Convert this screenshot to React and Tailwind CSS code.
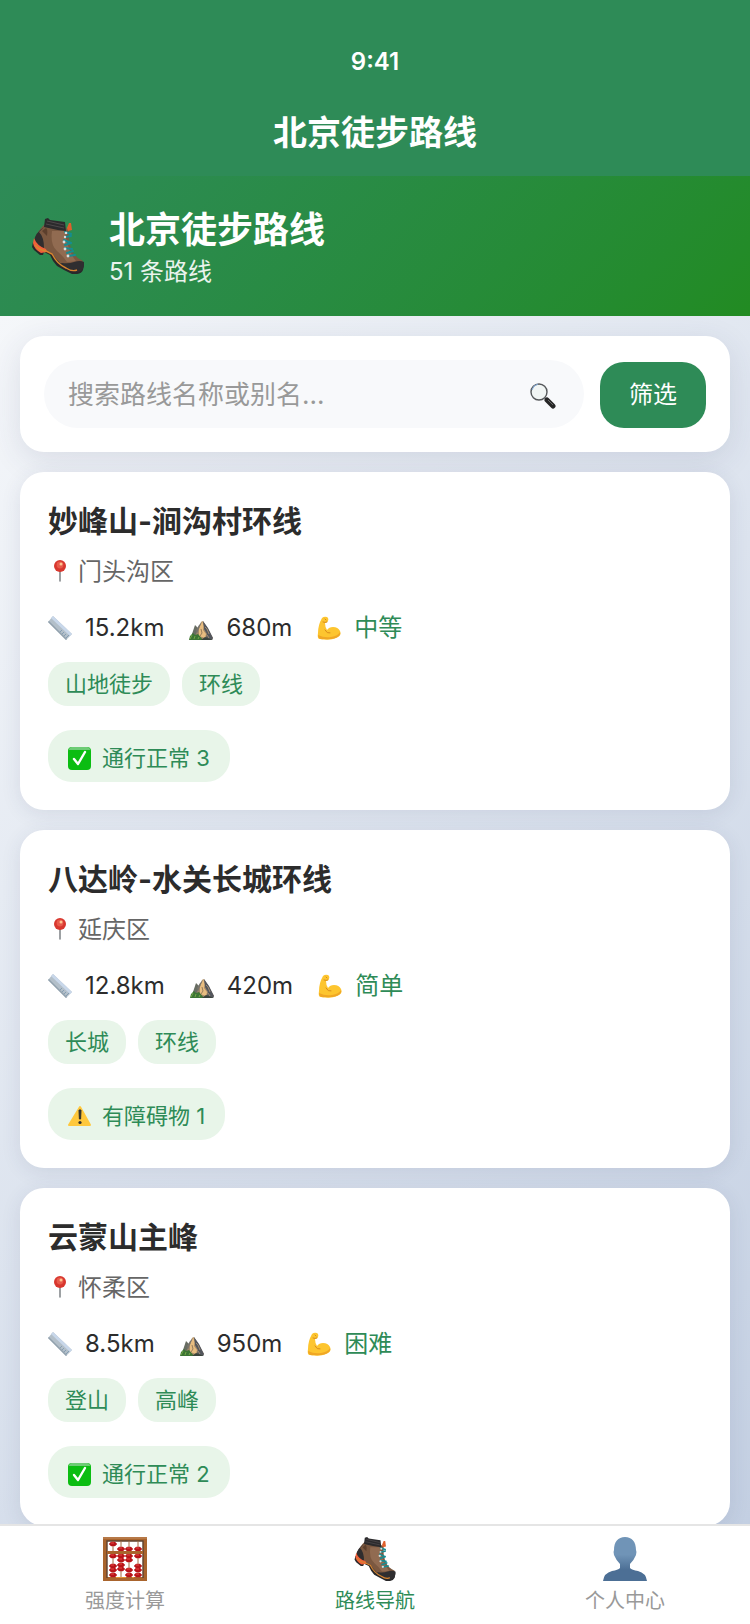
import { useState } from "react";

const routes = [
  {
    name: "妙峰山-涧沟村环线",
    district: "门头沟区",
    distance: "15.2km",
    climb: "680m",
    level: "中等",
    tags: ["山地徒步", "环线"],
    status: { type: "ok", label: "通行正常", count: 3 },
  },
  {
    name: "八达岭-水关长城环线",
    district: "延庆区",
    distance: "12.8km",
    climb: "420m",
    level: "简单",
    tags: ["长城", "环线"],
    status: { type: "warn", label: "有障碍物", count: 1 },
  },
  {
    name: "云蒙山主峰",
    district: "怀柔区",
    distance: "8.5km",
    climb: "950m",
    level: "困难",
    tags: ["登山", "高峰"],
    status: { type: "ok", label: "通行正常", count: 2 },
  },
];

const tabs = [
  { id: "calc", label: "强度计算", Icon: AbacusIcon },
  { id: "routes", label: "路线导航", Icon: BootIcon },
  { id: "me", label: "个人中心", Icon: PersonIcon },
];

function BootIcon({ className }) {
  return (
    <svg className={className} viewBox="6 6 52 56" aria-hidden="true">
      <path d="M19 12 L43 17 Q42 27 45 37 Q48 45 57 49 L56 57 L40 57 L24 42 L14 38 L8 29 Q12 18 19 12Z" fill="#7b5840" />
      <path d="M26 19 Q24 33 31 39 Q37 44 41 50 Q46 50 50 49 Q44 42 41 30 L38 19Z" fill="#916b51" />
      <path d="M18 15 L13 20 Q18 25 18 36 L13 36 L8 29 Q9 21 18 15Z" fill="#2f2d2e" />
      <path d="M20 16 Q22 17 21 24 L16 19Z" fill="#5c3f2c" />
      <path d="M19 7 L22 6 L24 8 L39 10 L40 19 Q30 18 18 15Z" fill="#2b2a2c" />
      <path d="M21 9 L38 13 M20 12 L38 16" stroke="#4d484a" strokeWidth="1" />
      <path d="M43 11 L45 11 L46 18 L42 19 L41 16Z" fill="#e0602c" />
      <path d="M7 30 L6 35 L8 38 L14 43 L17 43 L18 40 L24 43 L27 49 L31 54 L38 58 L46 62 Q55 63 57 58 L58 51 L46 58 L34 51 L25 41 L14 37Z" fill="#29282a" />
      <path d="M36 51 Q43 52 48 50 Q54 48 58 50 Q59 58 53 60 Q44 61 33 52Z" fill="#2f2e30" />
      <path d="M8 26 Q11 34 20 37 L21 40 L15 41 Q8 37 7 31Z" fill="#f0603a" />
      <path d="M9 33 Q13 38 20 39 L26 42 Q31 52 40 56 Q46 60 51 58" fill="none" stroke="#d8852f" strokeWidth="1.4" />
      <path d="M39 20 L45 22 M39 25 L45 24 M38 28 L45 31 M39 33 L45 31 M39 36 L46 37 M41 41 L47 39 M42 44 L49 43" stroke="#168c91" strokeWidth="2" strokeLinecap="round" />
      <g fill="#d9dedf">
        <circle cx="40" cy="21" r="1.3" />
        <circle cx="39" cy="25" r="1.2" />
        <circle cx="38" cy="30" r="1.4" />
        <circle cx="39" cy="37" r="1.4" />
        <circle cx="42" cy="44" r="1.4" />
      </g>
    </svg>
  );
}

const beads = [
  [10, [7, 19, 29, 33, 38]],
  [18, [12, 19, 23, 28, 32]],
  [26, [12, 19, 23, 33, 38]],
  [35, [12, 19, 29, 33, 38]],
];

function AbacusIcon({ className }) {
  return (
    <svg className={className} viewBox="0 0 44 44" aria-hidden="true">
      <rect x="2" y="2" width="40" height="40" fill="#fff" stroke="#a9642d" strokeWidth="4" />
      <path d="M0 1 H44" stroke="#bd8050" strokeWidth="1.5" />
      <path d="M4 41 V4 H40 V41" fill="none" stroke="#5d4130" strokeWidth="1.4" />
      {beads.map(([x, ys]) => (
        <g key={x}>
          <path d={`M${x} 4 V40`} stroke="#a36b42" strokeWidth="1" />
          {ys.map((y) => (
            <g key={y}>
              <path d={`M${x - 4} ${y} L${x - 2} ${y - 2} H${x + 2} L${x + 4} ${y} L${x + 2} ${y + 2} H${x - 2}Z`} fill="#b8151a" stroke="#b8151a" strokeWidth="0.4" />
              <path d={`M${x - 2} ${y - 1} h3`} stroke="#ed4a45" strokeWidth="0.9" />
            </g>
          ))}
        </g>
      ))}
      <path d="M4 15.5 H40" stroke="#a9642d" strokeWidth="3" />
      <path d="M13 40.5 H23 M29 40.5 H31" stroke="#e0922f" strokeWidth="1" />
    </svg>
  );
}

function PersonIcon({ className }) {
  return (
    <svg className={className} viewBox="0 0 44 44" aria-hidden="true">
      <defs>
        <linearGradient id="person" x1="0" y1="0" x2="0" y2="1">
          <stop offset="0.4" stopColor="#7094b7" />
          <stop offset="0.75" stopColor="#4c6f95" />
        </linearGradient>
      </defs>
      <path d="M22 0 C29 0 33 5 33 13 Q34 15 33 18 Q31 23 27 27 V31 Q29 33 35 34 Q43 36 44 44 H0 Q1 36 9 34 Q15 33 17 31 V27 Q13 23 11 18 Q10 15 11 13 C11 5 15 0 22 0Z" fill="url(#person)" />
    </svg>
  );
}

function SearchIcon() {
  return (
    <svg className="mt-1 size-[26px] shrink-0" viewBox="0 0 26 26" aria-hidden="true">
      <path d="M15 15 L18 18" stroke="#77797a" strokeWidth="2" />
      <path d="M17 17 L23 23" stroke="#262626" strokeWidth="5" strokeLinecap="round" />
      <path d="M18 17 L23 22" stroke="#6b6b6b" strokeWidth="1" />
      <circle cx="9" cy="9" r="8" fill="#f1f5f4" stroke="#55585a" strokeWidth="1.4" />
      <path d="M2 7 A8 8 0 0 1 8 1" fill="none" stroke="#86aede" strokeWidth="1" />
    </svg>
  );
}

function PinIcon() {
  return (
    <svg className="size-6" viewBox="0 0 24 24" aria-hidden="true">
      <path d="M12 11 V21" stroke="#85898c" strokeWidth="1.6" strokeLinecap="round" />
      <circle cx="12" cy="6" r="6" fill="#d8372e" />
      <circle cx="12" cy="5" r="3.4" fill="#e85a4b" />
      <circle cx="13" cy="4" r="1.5" fill="#ffc48f" />
    </svg>
  );
}

function RulerIcon() {
  return (
    <svg className="size-6" viewBox="0 0 24 24" aria-hidden="true">
      <path d="M5 0 L24 18 L18 24 L0 6Z" fill="#b3bfc9" />
      <path d="M5 0 L24 18 L22 20 L3 2Z" fill="#c8d7ea" />
      <path d="M0 6 L18 24 L19 23 L1 5Z" fill="#92a1ad" />
      <path d="M12 16 l2 -2 M14 18 l2 -2 M16 20 l2 -2 M18 22 l3 -3" stroke="#7895ae" strokeWidth="0.8" />
    </svg>
  );
}

function MountainIcon() {
  return (
    <svg className="size-6" viewBox="0 0 24 24" aria-hidden="true">
      <path d="M2 21 L6 9 L10 13 L14 24 L2 24Z" fill="#686d63" />
      <path d="M5 23 L12 6 L14 5 L19 13 L24 22 L22 24Z" fill="#a58a68" />
      <path d="M13 5 L15 10 L14 14 L17 18 L16 22 L10 20 L10 13Z" fill="#e8bd80" />
      <path d="M14 5 L19 12 L24 22 L23 24 L17 22 L18 18 L15 13Z" fill="#53565d" />
      <path d="M16 11 L18 13 L20 18 M18 19 L20 22" fill="none" stroke="#a99374" strokeWidth="0.9" />
      <path d="M13 6 L11 10 L9 15 L8 18 L7 14 L10 9Z" fill="#77736c" />
      <path d="M12 13 L13 17 L11 20" fill="none" stroke="#8d7557" strokeWidth="0.9" />
      <path d="M0 24 L1 20 L4 17 L6 19 L9 18 L14 24Z" fill="#3c7434" />
      <path d="M1 23 L3 19 M5 23 L6 20 M9 23 L10 21" stroke="#76a847" strokeWidth="1" />
      <path d="M12 24 L16 21 L24 24Z" fill="#39433c" />
    </svg>
  );
}

function MuscleIcon() {
  return (
    <svg className="size-6" viewBox="0 0 24 24" aria-hidden="true">
      <path d="M5 2 Q7 0 10 1 Q12 2 11 5 Q10 7 8 7 Q8 11 10 14 Q12 11 16 11 Q21 11 23 15 Q25 20 19 22 Q13 25 3 23 Q0 23 1 17 Q1 9 5 2Z" fill="#fdc52f" />
      <path d="M1 19 Q1 24 7 23 Q17 24 22 20 Q24 18 23 16 Q21 20 14 21 Q7 22 1 19Z" fill="#f0a725" />
      <path d="M6 6 Q8 7 10 6 M8 3 L9 4 M8 14 Q10 18 13 17" fill="none" stroke="#d88c1c" strokeWidth="1" strokeLinecap="round" />
    </svg>
  );
}

function StatusIcon({ type }) {
  if (type === "warn") {
    return (
      <svg className="size-6" viewBox="0 0 24 24" aria-hidden="true">
        <path d="M12 3 L22 21 H1Z" fill="#ffc83d" stroke="#ffc83d" strokeWidth="2" strokeLinejoin="round" />
        <path d="M11 6 H13 L12.6 15 H11.4Z" fill="#31302d" stroke="#31302d" strokeWidth="1" strokeLinejoin="round" />
        <circle cx="12" cy="18.5" r="1.6" fill="#31302d" />
      </svg>
    );
  }
  return (
    <svg className="size-6" viewBox="0 0 24 24" aria-hidden="true">
      <rect x="0" y="1" width="23" height="23" rx="4" fill="#0bbd12" />
      <path d="M4 1 H19 Q22 1 22 4 H1 Q1 1 4 1Z" fill="#6dcc75" />
      <path d="M6 13 L10 18 L17 6" fill="none" stroke="#fff" strokeWidth="2.4" strokeLinecap="round" strokeLinejoin="round" />
    </svg>
  );
}

function Stat({ icon, children, className = "text-[#2c2c2c]" }) {
  return (
    <span className="flex items-center gap-[13px]">
      {icon}
      <span className={className}>{children}</span>
    </span>
  );
}

function RouteCard({ route }) {
  return (
    <article className="rounded-3xl bg-white p-7 shadow-[0_4px_20px_rgba(46,60,100,0.1)]">
      <h2 className="text-[30px] leading-[42px] font-bold text-[#2c2c2c]">{route.name}</h2>
      <p className="mt-2.5 flex items-center gap-1.5 text-2xl leading-10 text-[#666]">
        <PinIcon />
        <span>{route.district}</span>
      </p>
      <div className="mt-4 flex items-center gap-[25px] text-2xl leading-10">
        <Stat icon={<RulerIcon />}>{route.distance}</Stat>
        <Stat icon={<MountainIcon />}>{route.climb}</Stat>
        <Stat icon={<MuscleIcon />} className="text-[#2e8b57]">{route.level}</Stat>
      </div>
      <ul className="mt-3.5 flex gap-3">
        {route.tags.map((tag) => (
          <li key={tag} className="rounded-[20px] bg-[#e8f5e9] px-[17px] text-[22px] leading-11 text-[#2e8b57]">
            {tag}
          </li>
        ))}
      </ul>
      <div className="mt-6 flex">
        <span className="flex items-center gap-2.5 rounded-3xl bg-[#e8f5e9] px-5 pt-1 text-[22px] leading-12 text-[#2e8b57]">
          <StatusIcon type={route.status.type} />
          <span>{route.status.label} {route.status.count}</span>
        </span>
      </div>
    </article>
  );
}

export default function App() {
  const [keyword, setKeyword] = useState("");
  const [tab, setTab] = useState("routes");

  const shown = routes.filter((r) => r.name.includes(keyword));

  return (
    <div className="flex h-screen flex-col font-[Inter,'Noto_Sans_CJK_SC',sans-serif]">
      {/* Navigation bar */}
      <header className="flex flex-col items-center bg-[#2e8b57] pt-10 pb-[18px] text-white">
        <time className="text-2xl leading-11 font-semibold">9:41</time>
        <div className="mt-6 text-[34px] leading-[50px] font-bold">北京徒步路线</div>
      </header>

      {/* Banner */}
      <section className="flex h-35 shrink-0 items-center gap-[25px] bg-linear-135 from-[#2e8b57] to-[#228b22] px-8 text-white">
        <BootIcon className="h-14 w-[52px]" />
        <div className="pt-1">
          <h1 className="text-4xl leading-12 font-bold">北京徒步路线</h1>
          <p className="text-2xl leading-9 opacity-90">51 条路线</p>
        </div>
      </section>

      <main className="flex min-h-0 flex-1 flex-col gap-5 overflow-y-auto bg-linear-135 from-[#f5f7fa] to-[#c3cfe2] p-5 [scrollbar-width:none]">
        <form
          className="flex items-end gap-4 rounded-3xl bg-white p-6 shadow-[0_8px_32px_rgba(46,60,100,0.12)]"
          onSubmit={(e) => e.preventDefault()}
        >
          <label className="flex h-17 min-w-0 flex-1 items-center rounded-full bg-[#f8f9fb] pr-7 pl-6">
            <input
              type="text"
              aria-label="搜索路线"
              className="min-w-0 flex-1 bg-transparent text-[26px] text-[#2c2c2c] outline-none placeholder:text-[#999]"
              placeholder="搜索路线名称或别名..."
              value={keyword}
              onChange={(e) => setKeyword(e.target.value)}
            />
            <SearchIcon />
          </label>
          <button type="submit" className="h-[66px] rounded-3xl bg-[#2e8b57] px-[29px] text-2xl text-white">
            筛选
          </button>
        </form>

        {shown.map((route) => (
          <RouteCard key={route.name} route={route} />
        ))}
      </main>

      {/* Tab bar */}
      <nav className="grid h-25 shrink-0 grid-cols-3 border-t-2 border-[#e5e5e5] bg-white">
        {tabs.map(({ id, label, Icon }) => (
          <button
            key={id}
            type="button"
            onClick={() => setTab(id)}
            className={`flex flex-col items-center gap-1 pt-[11px] text-xl leading-8 ${tab === id ? "text-[#2e8b57]" : "text-[#999]"}`}
          >
            <Icon className="size-11" />
            {label}
          </button>
        ))}
      </nav>
    </div>
  );
}
